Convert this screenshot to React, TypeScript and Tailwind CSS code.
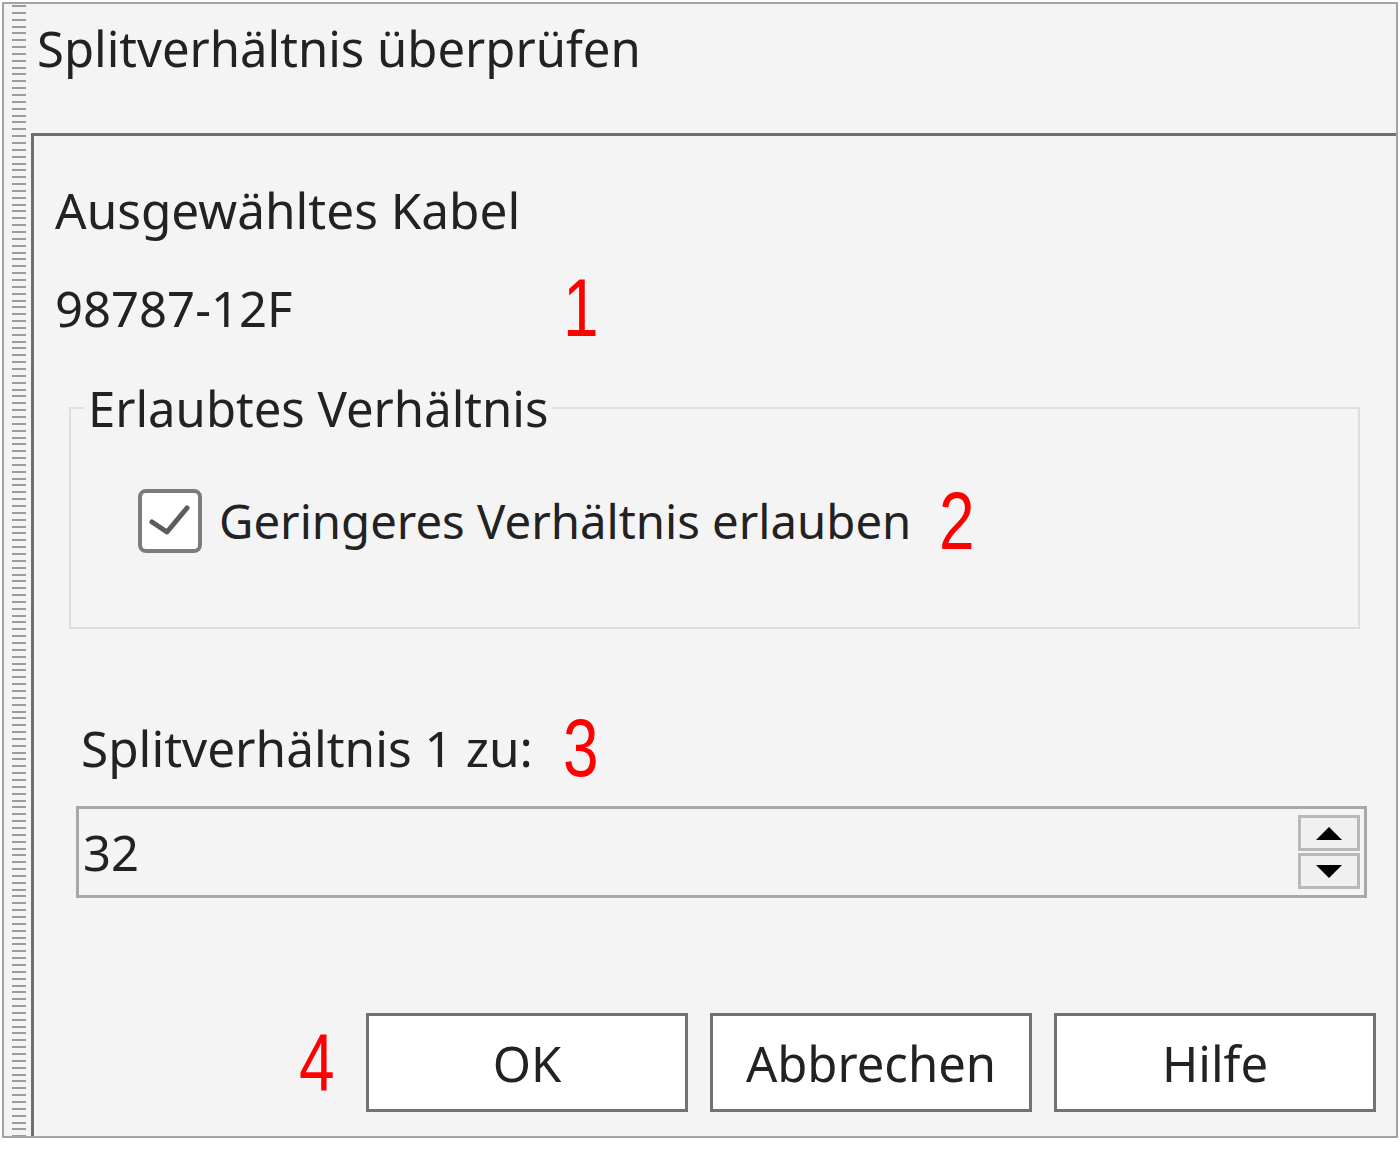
import React from "react";

const ui = { fontFamily: '"Noto Sans", "Open Sans", sans-serif' };
const red = { fontFamily: '"Liberation Sans", Arial, sans-serif' };

function RedNum({ n, className = "" }: { n: string; className?: string }) {
  return (
    <span
      style={red}
      className={`inline-block w-[40px] origin-left scale-x-[0.78] text-[82px] leading-[60px] text-[#ff0000] ${className}`}
    >
      {n}
    </span>
  );
}

function Triangle({ up }: { up: boolean }) {
  return (
    <svg width="26" height="13" viewBox="0 0 26 13">
      {up ? <polygon points="13,0 26,13 0,13" fill="#000" /> : <polygon points="0,0 26,0 13,13" fill="#000" />}
    </svg>
  );
}

export default function App() {
  return (
    <div className="w-[1400px] h-[1160px] bg-white" style={ui}>
      <div className="ml-[2px] mt-[2px] w-[1396px] h-[1136px] border-2 border-[#a3a3a3] bg-[#f4f4f4] flex">
        {/* grip */}
        <div className="w-[27px] h-full pl-[8px] pt-[1px]">
          <div className="w-[14px] h-full bg-[repeating-linear-gradient(to_bottom,#9c9c9c_0px,#9c9c9c_2px,transparent_2px,transparent_6.85px)]" />
        </div>
        {/* main */}
        <div className="flex-1 flex flex-col">
          <div className="h-[129px] pt-[14px] pl-[6px]">
            <div className="text-[49px] leading-[60px] text-[#222]">Splitverhältnis überprüfen</div>
          </div>
          <div className="flex-1 flex flex-col border-t-[3px] border-l-[3px] border-[#6e6e6e]">
            <div className="mt-[44px] pl-[21px] text-[49.5px] leading-[60px] text-[#222]">Ausgewähltes Kabel</div>
            <div className="mt-[38px] pl-[21px] flex items-center h-[60px]">
              <span className="w-[508px] text-[49px] leading-[60px] text-[#222]">98787-12F</span>
              <RedNum n="1" />
            </div>
            <fieldset className="mt-[40px] ml-[35px] w-[1291px] h-[251px] border-2 border-[#dedede]">
              <legend className="ml-[13px] px-[4px] text-[49px] leading-[60px] text-[#222]">Erlaubtes Verhältnis</legend>
              <div className="flex items-center h-[66px] mt-[50px] pl-[67px]">
                <div className="w-[64px] h-[64px] rounded-[8px] border-[4px] border-[#7c7c7c] bg-white flex items-center justify-center">
                  <svg width="56" height="56" viewBox="0 0 56 56">
                    <polyline points="10,29 25,39 45,15" fill="none" stroke="#5c5c5c" strokeWidth="5" strokeLinecap="round" strokeLinejoin="round" />
                  </svg>
                </div>
                <span className="ml-[17px] text-[47.3px] leading-[60px] text-[#222]">Geringeres Verhältnis erlauben</span>
                <RedNum n="2" className="ml-[28px]" />
              </div>
            </fieldset>
            <div className="mt-[89px] pl-[47px] flex items-center h-[60px]">
              <span className="text-[49.5px] leading-[60px] text-[#222]">Splitverhältnis 1 zu:</span>
              <RedNum n="3" className="ml-[30px]" />
            </div>
            <div className="mt-[28px] ml-[42px] w-[1291px] h-[92px] border-[3px] border-[#a8a8a8] flex items-center pl-[4px] pr-[4px]">
              <span className="flex-1 text-[49px] leading-[60px] text-[#222]">32</span>
              <div className="flex flex-col gap-[2px] w-[62px]">
                <div className="h-[36px] border-[3px] border-[#b8b8b8] bg-[#f0f0f0] flex items-center justify-center">
                  <Triangle up />
                </div>
                <div className="h-[36px] border-[3px] border-[#b8b8b8] bg-[#f0f0f0] flex items-center justify-center">
                  <Triangle up={false} />
                </div>
              </div>
            </div>
            <div className="mt-auto mb-[24px] flex items-center justify-end pr-[20px]">
              <RedNum n="4" className="mr-[27px]" />
              <div className="flex gap-[22px]">
                {["OK", "Abbrechen", "Hilfe"].map((t) => (
                  <div key={t} className="w-[322px] h-[99px] border-[3px] border-[#727272] bg-white flex items-center justify-center text-[49px] leading-[60px] text-[#222]">
                    {t}
                  </div>
                ))}
              </div>
            </div>
          </div>
        </div>
      </div>
    </div>
  );
}
